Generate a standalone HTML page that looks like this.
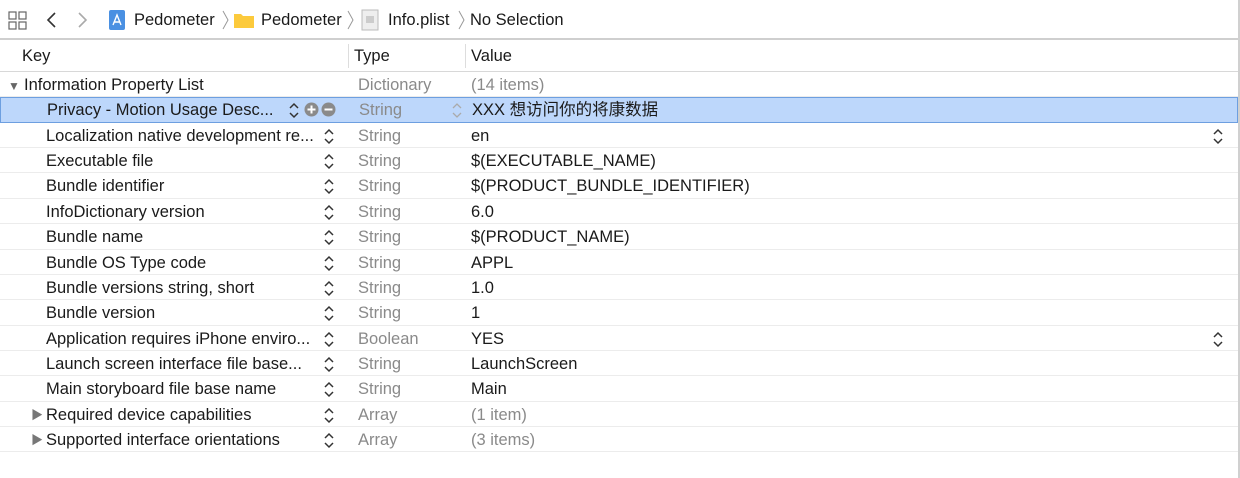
<!DOCTYPE html>
<html><head><meta charset="utf-8"><style>
*{margin:0;padding:0;box-sizing:border-box}
body{width:1240px;height:478px;background:#fff;font-family:"Liberation Sans","Noto Sans CJK SC",sans-serif;font-size:16.5px;color:#1a1a1a;position:relative;overflow:hidden}
.abs{position:absolute;white-space:nowrap;line-height:19px}
.tb{position:absolute;left:0;top:0;width:1240px;height:40px;background:#fff;border-bottom:2px solid #cfcfcf}
.hdr{position:absolute;left:0;top:41px;width:1238px;height:31px;border-bottom:1px solid #d8d8d8}
.row{position:absolute;left:0;width:1238px;height:25.4px;border-bottom:1px solid #ececec}
.row span{position:absolute;top:4px;white-space:nowrap;line-height:19px}
.ty{color:#8a8a8a;left:358px}
.va{left:471px}
.row span.st{top:5px;line-height:normal}
.sel{background:#bdd7fb;border:1px solid #6d9fe0}
.rb{position:absolute;right:0;top:0;width:2px;height:478px;background:#d0d0d0}
</style></head><body>
<div class="tb">
<svg class="abs" style="left:8px;top:11px" width="19" height="19" viewBox="0 0 19 19" fill="none" stroke="#666" stroke-width="1.2"><rect x="1" y="1" width="7" height="7"/><rect x="11" y="1" width="7" height="7"/><rect x="1" y="11" width="7" height="7"/><rect x="11" y="11" width="7" height="7"/></svg>
<svg class="abs" style="left:45px;top:11px" width="12" height="18"><path d="M10 2 L3 9 L10 16" stroke="#333" stroke-width="1.6" fill="none"/></svg>
<svg class="abs" style="left:77px;top:11px" width="12" height="18"><path d="M2 2 L9 9 L2 16" stroke="#aaa" stroke-width="1.6" fill="none"/></svg>
<svg class="abs" style="left:108px;top:9px" width="18" height="22"><rect x="1" y="1" width="16" height="20" rx="2" fill="#4a90e2"/><path d="M5 16 L9 6 L13 16 M6.5 13 H11.5" stroke="#fff" stroke-width="1.4" fill="none"/></svg>
<span class="abs" style="left:134px;top:11px">Pedometer</span>
<svg class="abs" style="left:222px;top:10px" width="8" height="20"><path d="M1 1 L6 10 L1 19" stroke="#999" fill="none"/></svg>
<svg class="abs" style="left:233px;top:11px" width="22" height="18"><path d="M1 3 H8 L10 5 H21 V17 H1 Z" fill="#fcca3c"/></svg>
<span class="abs" style="left:261px;top:11px">Pedometer</span>
<svg class="abs" style="left:347px;top:10px" width="8" height="20"><path d="M1 1 L6 10 L1 19" stroke="#999" fill="none"/></svg>
<svg class="abs" style="left:361px;top:9px" width="18" height="22"><rect x="1" y="1" width="16" height="20" fill="#eee" stroke="#bbb"/><rect x="5" y="7" width="8" height="7" fill="#ccc"/></svg>
<span class="abs" style="left:388px;top:11px">Info.plist</span>
<svg class="abs" style="left:458px;top:10px" width="8" height="20"><path d="M1 1 L6 10 L1 19" stroke="#999" fill="none"/></svg>
<span class="abs" style="left:470px;top:11px">No Selection</span>
</div>
<div class="hdr">
<span class="abs" style="left:22px;top:6px">Key</span>
<div class="abs" style="left:348px;top:3px;width:1px;height:24px;background:#ddd"></div>
<span class="abs" style="left:354px;top:6px">Type</span>
<div class="abs" style="left:465px;top:3px;width:1px;height:24px;background:#ddd"></div>
<span class="abs" style="left:471px;top:6px">Value</span>
</div>
<div class="rb"></div>
<div id="rows"></div>
<script>
const S='<svg width="12" height="17" viewBox="0 0 12 17" fill="none" stroke="#333" stroke-width="1.5"><path d="M2 6 L6 2 L10 6 M2 11 L6 15 L10 11"/></svg>';
const SL='<svg width="12" height="17" viewBox="0 0 12 17" fill="none" stroke="#aaa" stroke-width="1.3"><path d="M2 6 L6 2 L10 6 M2 11 L6 15 L10 11"/></svg>';
const rows=[
["Information Property List","Dictionary","(14 items)",0,1],
["Privacy - Motion Usage Desc...","String","XXX 想访问你的将康数据",2,0],
["Localization native development re...","String","en",1,0,1],
["Executable file","String","$(EXECUTABLE_NAME)",1],
["Bundle identifier","String","$(PRODUCT_BUNDLE_IDENTIFIER)",1],
["InfoDictionary version","String","6.0",1],
["Bundle name","String","$(PRODUCT_NAME)",1],
["Bundle OS Type code","String","APPL",1],
["Bundle versions string, short","String","1.0",1],
["Bundle version","String","1",1],
["Application requires iPhone enviro...","Boolean","YES",1,0,1],
["Launch screen interface file base...","String","LaunchScreen",1],
["Main storyboard file base name","String","Main",1],
["Required device capabilities","Array","(1 item)",1,2],
["Supported interface orientations","Array","(3 items)",1,2]];
let h='';
rows.forEach((r,i)=>{
 const top=72+i*25.36;
 const sel=r[3]==2;
 h+=`<div class="row${sel?' sel':''}" style="top:${top}px">`;
 if(r[4]==2) h+=`<span style="left:31px;top:6px;color:#777;font-size:12px;line-height:14px">▶</span>`;
 if(i==0) h+=`<span style="left:8px;top:7px;color:#666;font-size:12px;line-height:14px">▼</span><span style="left:24px">Information Property List</span>`;
 else h+=`<span style="left:46px;${sel?'top:3px':''}">${r[0]}</span>`;
 h+=`<span class="ty" style="${sel?'top:3px':''}">${r[1]}</span>`;
 h+=`<span class="va" style="${r[4]==1||r[4]==2?'color:#8a8a8a;':''}${sel?'top:3px':''}">${r[2]}</span>`;
 if(sel){
  h+=`<span class="st" style="left:287px;top:4px">${S}</span>`;
  h+=`<span class="st" style="left:303px;top:4px"><svg width="32" height="15"><circle cx="7.5" cy="7.5" r="7" fill="#8a8a8a"/><path d="M3.5 7.5H11.5M7.5 3.5V11.5" stroke="#fff" stroke-width="2"/><circle cx="24.5" cy="7.5" r="7" fill="#8a8a8a"/><path d="M20.5 7.5H28.5" stroke="#fff" stroke-width="2"/></svg></span>`;
  h+=`<span class="st" style="left:450px;top:4px">${SL}</span>`;
 } else if(r[3]==1){
  h+=`<span class="st" style="left:323px">${S}</span>`;
 }
 if(r[5]) h+=`<span class="st" style="left:1212px">${S}</span>`;
 h+='</div>';
});
document.getElementById('rows').innerHTML=h;
</script>
</body></html>
